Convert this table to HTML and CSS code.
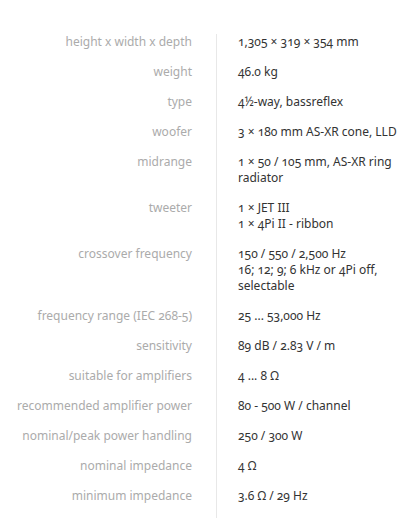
FILE: index.html
```html
<!DOCTYPE html>
<html>
<head>
<meta charset="utf-8">
<link rel="stylesheet" href="styles.css">
</head>
<body>
<dl class="specs">
  <dt>height x width x depth</dt><dd>1,305 × 319 × 354 mm</dd>
  <dt>weight</dt><dd>46.0 kg</dd>
  <dt>type</dt><dd>4½-way, bassreflex</dd>
  <dt>woofer</dt><dd>3 × 180 mm AS-XR cone, LLD</dd>
  <dt>midrange</dt><dd>1 × 50 / 105 mm, AS-XR ring radiator</dd>
  <dt>tweeter</dt><dd>1 × JET III<br>1 × 4Pi II - ribbon</dd>
  <dt>crossover frequency</dt><dd>150 / 550 / 2,500 Hz<br>16; 12; 9; 6 kHz or 4Pi off, selectable</dd>
  <dt>frequency range (IEC 268-5)</dt><dd>25 ... 53,000 Hz</dd>
  <dt>sensitivity</dt><dd>89 dB / 2.83 V / m</dd>
  <dt>suitable for amplifiers</dt><dd>4 ... 8 Ω</dd>
  <dt>recommended amplifier power</dt><dd>80 - 500 W / channel</dd>
  <dt>nominal/peak power handling</dt><dd>250 / 300 W</dd>
  <dt>nominal impedance</dt><dd>4 Ω</dd>
  <dt>minimum impedance</dt><dd>3.6 Ω / 29 Hz</dd>
</dl>
</body>
</html>
```

FILE: styles.css
```css
html, body {
  margin: 0;
  padding: 0;
  background: #fff;
}
.specs {
  margin: 0;
  padding-top: 34px;
  display: grid;
  grid-template-columns: 216px 190px;
  font-family: "Noto Sans", "Open Sans", sans-serif;
  font-size: 12px;
  line-height: 16px;
  font-variant-numeric: oldstyle-nums;
}
.specs dt {
  margin: 0;
  padding: 0 24px 14px 0;
  text-align: right;
  color: #ababab;
}
.specs dd {
  margin: 0;
  padding: 0 0 14px 21px;
  border-left: 1px solid #e8e8e8;
  color: #333;
}
```
